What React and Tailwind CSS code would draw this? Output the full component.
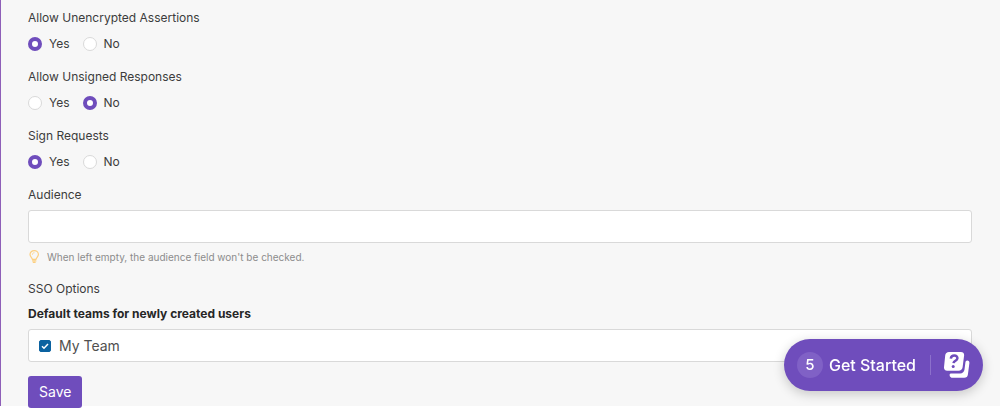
import React, { useState } from 'react';

const radioFields = [
    { name: 'unencrypted', label: 'Allow Unencrypted Assertions' },
    { name: 'unsigned', label: 'Allow Unsigned Responses' },
    { name: 'signRequests', label: 'Sign Requests' },
];

const RadioField = ({ name, label, value, onChange }) => (
    <fieldset className="mb-[13px]">
        <legend className="mb-[6px] h-5 leading-5">{label}</legend>
        <div className="flex h-5 items-center gap-[13px]">
            {['Yes', 'No'].map((option) => (
                <label key={option} className="flex items-center gap-[7px] leading-5">
                    <input
                        type="radio"
                        name={name}
                        value={option}
                        checked={value === option}
                        onChange={() => onChange(name, option)}
                        className="size-[14px] appearance-none rounded-full border border-[#d9d9d9] bg-white checked:border-[4px] checked:border-[#6f4dbc]"
                    />
                    {option}
                </label>
            ))}
        </div>
    </fieldset>
);

const BulbIcon = () => (
    <svg viewBox="0 0 12 14" className="h-[14px] w-3 shrink-0" fill="none" stroke="#fccf80" strokeWidth="1.2" strokeLinecap="round" strokeLinejoin="round" aria-hidden="true">
        <path d="M4.3 9.3C4.3 7.600 2 6.800 2 4.500a4.200 3.900 0 0 1 8.400 0C10.400 6.800 8.100 7.600 8.100 9.300Z" />
        <path d="M4.500 10.900h3.400M5.300 12.400h1.800" />
        <path d="M4.400 4.400c0-1 .7-1.700 1.700-1.700" strokeWidth="0.800" />
    </svg>
);

const HelpCardsIcon = () => (
    <svg viewBox="0 0 26 28" className="h-7 w-[26px] shrink-0" aria-hidden="true">
        <path d="M23.3 9.5c1.4 0 2.3 1.1 2.1 2.5l-1.5 11.5a3.8 3.8 0 0 1-3.7 3.3H8.8c-1.9 0-3.2-1.2-3.2-2.9 0-1 .6-1.5 1.6-1.5h8.9c2.5 0 4.1-1.5 4.4-3.9l.9-6.9c.2-1.4.7-2.1 1.9-2.1Z" fill="#fff" />
        <path d="M5 1h11.9c2.2 0 3.5 1.5 3.2 3.6l-1.5 11.7c-.3 2.1-1.9 3.4-4 3.4H3.1C1 19.7-.2 18.3 0 16.2L1.2 4.4C1.4 2.3 2.9 1 5 1Z" fill="#fff" />
        <path d="M6.800 7.600c.3-2.100 1.800-3 3.500-3 2.100 0 3.300 1.100 3.100 2.800-.3 2.400-3.600 2.400-3.900 4.800" fill="none" stroke="#6f4dbc" strokeWidth="2.500" />
        <circle cx="9.200" cy="15.500" r="1.500" fill="#6f4dbc" />
    </svg>
);

const App = () => {
    const [values, setValues] = useState({
        unencrypted: 'Yes',
        unsigned: 'No',
        signRequests: 'Yes',
        audience: '',
        myTeam: true,
    });

    const handleChange = (name, value) => {
        setValues((prev) => ({ ...prev, [name]: value }));
    };

    return (
        <div className="bg-white pb-[11px] font-['Inter',sans-serif] text-xs text-[#3c3c3c]">
            <form
                onSubmit={(e) => e.preventDefault()}
                className="flex flex-col border-l border-[#8e5fb8] bg-[#f7f7f7] pt-2 pr-7 pl-[27px]"
            >
                {radioFields.map((field) => (
                    <RadioField key={field.name} {...field} value={values[field.name]} onChange={handleChange} />
                ))}

                <label htmlFor="audience" className="leading-5">Audience</label>
                <input
                    id="audience"
                    type="text"
                    value={values.audience}
                    onChange={(e) => handleChange('audience', e.target.value)}
                    className="mt-[5px] h-[33px] rounded-[3px] border border-[#d9d9d9] bg-white px-3"
                />
                <p className="mt-[6px] flex h-4 items-center gap-[7px] text-[10px] leading-4 text-[#8c8c8c]">
                    <BulbIcon />
                    When left empty, the audience field won't be checked.
                </p>

                <h2 className="mt-[14px] leading-5">SSO Options</h2>
                <h3 className="mt-[5px] leading-5 font-bold text-[#262626]">Default teams for newly created users</h3>
                <div className="mt-[5px] flex h-[33px] items-center rounded-[3px] border border-[#d9d9d9] bg-white px-[10px]">
                    <label className="flex items-center gap-2 text-sm leading-5 text-[#505050]">
                        <span className="grid size-3 place-items-center">
                            <input
                                type="checkbox"
                                checked={values.myTeam}
                                onChange={(e) => handleChange('myTeam', e.target.checked)}
                                className="peer col-start-1 row-start-1 size-3 appearance-none rounded-[2px] border border-[#0b62a0] bg-white checked:bg-[#0b62a0]"
                            />
                            <svg viewBox="0 0 12 12" className="pointer-events-none invisible col-start-1 row-start-1 size-3 peer-checked:visible" fill="none" stroke="#fff" strokeWidth="1.5" aria-hidden="true">
                                <path d="m3 6.200 2 2 4-4.200" />
                            </svg>
                        </span>
                        My Team
                    </label>
                </div>
                <button
                    type="submit"
                    className="mt-[14px] -mb-0.5 h-8 self-start rounded-[3px] bg-[#6f4dbc] px-[11px] text-sm text-white"
                >
                    Save
                </button>
            </form>

            <button
                type="button"
                className="fixed right-[17px] bottom-[26px] flex h-[52px] items-center rounded-full bg-[#6f4dbc] px-[13px] text-base font-medium text-white shadow-[0_3px_12px_rgba(0,0,0,0.2)]"
            >
                <span className="mr-[6px] grid size-[26px] place-items-center rounded-full bg-[#8061c6] text-[15px]">5</span>
                Get Started
                <span className="mr-[13px] ml-[14px] h-5 w-px bg-[#8c70cb]" />
                <HelpCardsIcon />
            </button>
        </div>
    );
};

export default App;
